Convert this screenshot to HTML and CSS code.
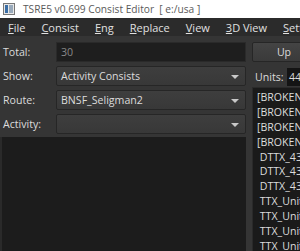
FILE: index.html
```html
<!DOCTYPE html>
<html>
    <head>
        <meta charset="utf-8">
        <title>TSRE5 Consist Editor</title>
        <link rel="stylesheet" href="styles.css">
    </head>
    <body>
        <div class="titlebar">
            <svg class="appicon" width="12" height="12" viewBox="0 0 12 12">
                <rect x="0.5" y="0.5" width="11" height="11" fill="#e8e8e8" stroke="#777"/>
                <rect x="2" y="2" width="3" height="8" fill="#3a6ea5"/>
                <rect x="6" y="2" width="4" height="8" fill="#9ab"/>
            </svg>
            <span>TSRE5 v0.699 Consist Editor &nbsp;[ e:/usa ]</span>
        </div>
        <div class="menubar">
            <span><u>F</u>ile</span>
            <span><u>C</u>onsist</span>
            <span><u>E</u>ng</span>
            <span><u>R</u>eplace</span>
            <span><u>V</u>iew</span>
            <span><u>3</u>D View</span>
            <span><u>S</u>ettings</span>
        </div>
        <div class="main">
            <div class="left">
                <div class="row">
                    <label>Total:</label>
                    <div class="field">30</div>
                </div>
                <div class="row">
                    <label>Show:</label>
                    <div class="combo">Activity Consists<span class="arrow"></span></div>
                </div>
                <div class="row">
                    <label>Route:</label>
                    <div class="combo">BNSF_Seligman2<span class="arrow"></span></div>
                </div>
                <div class="row">
                    <label>Activity:</label>
                    <div class="combo"><span class="arrow"></span></div>
                </div>
                <div class="view"></div>
            </div>
            <div class="right">
                <div class="button">Up</div>
                <div class="units">
                    <label>Units:</label>
                    <div class="unitfield">44</div>
                </div>
                <ul class="list">
                    <li>[BROKEN]</li>
                    <li>[BROKEN]</li>
                    <li>[BROKEN]</li>
                    <li>[BROKEN]</li>
                    <li>&nbsp;DTTX_43</li>
                    <li>&nbsp;DTTX_43</li>
                    <li>&nbsp;DTTX_43</li>
                    <li>&nbsp;TTX_Unit</li>
                    <li>&nbsp;TTX_Unit</li>
                    <li>&nbsp;TTX_Unit</li>
                    <li>&nbsp;TTX_Unit</li>
                </ul>
            </div>
        </div>
    </body>
</html>
```
FILE: styles.css
```css
html, body {
    margin: 0;
    width: 300px;
    height: 251px;
    overflow: hidden;
    background: #353535;
    font-family: "Open Sans", "Noto Sans", sans-serif;
    font-size: 10.6px;
    color: #dcdcdc;
}

.titlebar {
    height: 18px;
    background: #ffffff;
    color: #5a5a5a;
    font-size: 10.2px;
    display: flex;
    align-items: center;
    white-space: nowrap;
}
.appicon {
    margin: 0 8px 0 3px;
}

.menubar {
    height: 18px;
    background: #2b2b2b;
    display: flex;
    align-items: center;
    white-space: nowrap;
    font-size: 11px;
    color: #e0e0e0;
    padding-left: 8px;
    gap: 16px;
}

.main {
    display: flex;
    gap: 6px;
    padding-top: 6px;
}
.left {
    width: 246px;
    flex: none;
    display: flex;
    flex-direction: column;
    gap: 4px;
}
.row {
    display: flex;
    align-items: center;
    height: 20px;
}
.row label {
    width: 53px;
    padding-left: 3px;
    flex: none;
}
.field, .combo {
    flex: 1;
    height: 20px;
    box-sizing: border-box;
    display: flex;
    align-items: center;
    padding-left: 4px;
    position: relative;
}
.field {
    background: #1e1e1e;
    border: 1px solid #2a2a2a;
    color: #8a8a8a;
}
.combo {
    background: linear-gradient(#3e3e3e, #383838);
    border: 1px solid #262626;
    border-radius: 2px;
}
.arrow {
    position: absolute;
    right: 6px;
    top: 8px;
    border-left: 4px solid transparent;
    border-right: 4px solid transparent;
    border-top: 4px solid #c8c8c8;
}
.view {
    height: 130px;
    margin-top: -1px;
    background: #1c1c1c;
    border-left: 2px solid #2a2a2a;
}

.right {
    width: 60px;
    flex: none;
    display: flex;
    flex-direction: column;
}
.button {
    height: 20px;
    box-sizing: border-box;
    background: linear-gradient(#444, #3a3a3a);
    border: 1px solid #262626;
    border-radius: 2px;
    display: flex;
    align-items: center;
    justify-content: center;
    width: 64px;
    margin-bottom: 4px;
}
.units {
    display: flex;
    align-items: center;
    height: 21px;
}
.units label {
    width: 32px;
    flex: none;
    padding-left: 3px;
}
.unitfield {
    background: #141414;
    height: 18px;
    line-height: 18px;
    padding-left: 2px;
    flex: 1;
}
.list {
    list-style: none;
    margin: 0;
    padding: 2px 0 0 4px;
    background: #1a1a1a;
    border: 1px solid #2a2a2a;
    height: 170px;
    white-space: nowrap;
}
.list li {
    height: 14.9px;
    line-height: 15px;
}
```
